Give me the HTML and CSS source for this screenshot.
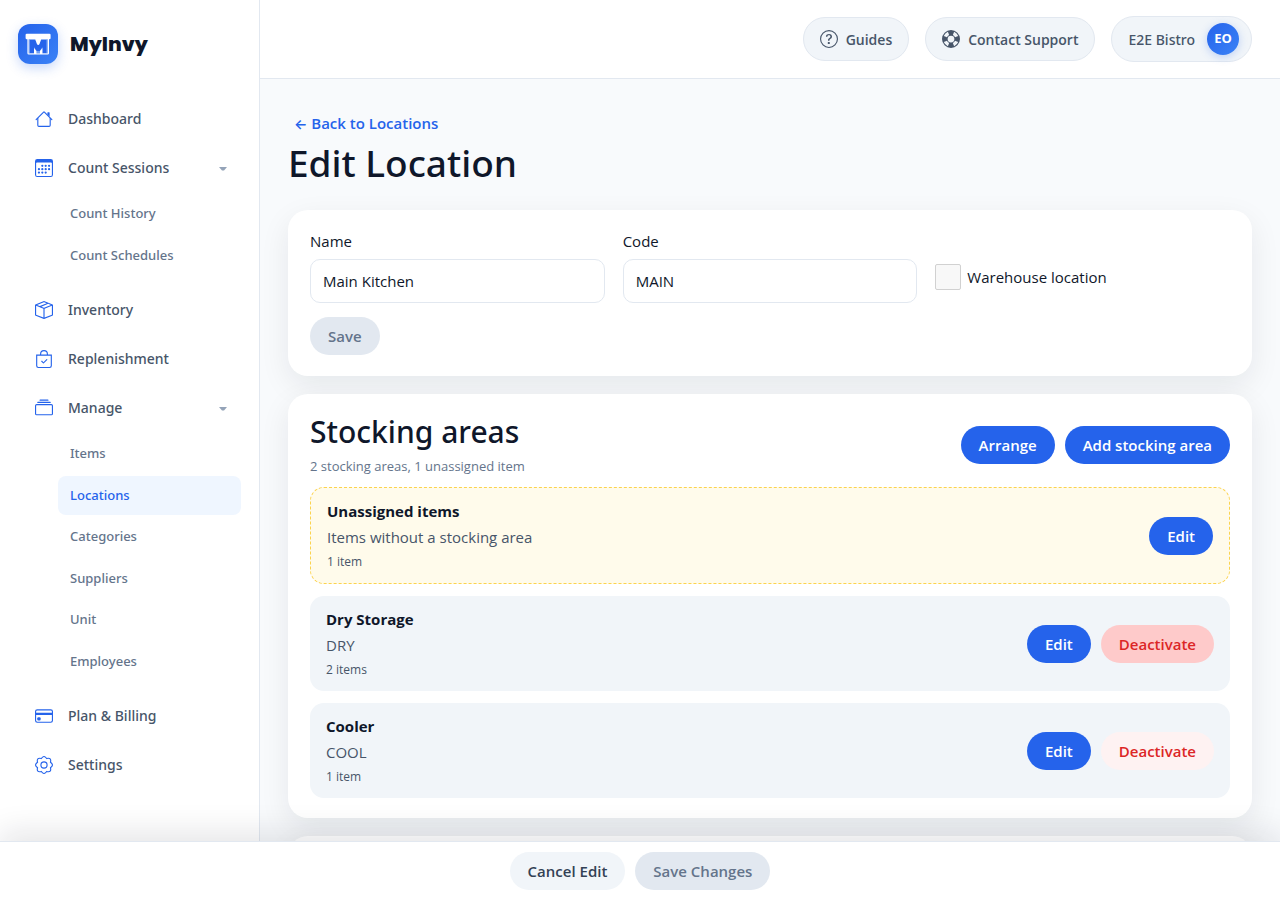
FILE: index.html
```html
<!DOCTYPE html>
<html lang="en">
<head>
<meta charset="utf-8">
<meta name="viewport" content="width=device-width, initial-scale=1">
<title>Edit Location - MyInvy</title>
<link rel="stylesheet" href="styles.css">
</head>
<body>
<div class="app">
  <aside class="sidebar">
    <a class="brand" href="#">
      <span class="brand-mark">
        <svg viewBox="0 0 40 40" width="40" height="40" aria-hidden="true">
          <path fill="#fff" d="M8.800 9.800h22.600q1.200 0 1.200 1.200v3q0 1.200-1.200 1.200H8.800q-1.200 0-1.200-1.200v-3q0-1.200 1.200-1.200z"/>
          <path fill="#fff" fill-opacity=".3" d="M10 15h20.400v15H10z"/>
          <path fill="none" stroke="#fff" stroke-width="1.200" d="M10 15v14.200q0 .8.800.8h18.800q.8 0 .8-.8V15"/>
          <path fill="#2563eb" d="M12 16h5.200l3 5 3-5h5.200v13h-4v-6l-2.600 4h-3.200L16 23v6h-4z"/>
          <path fill="#fff" d="M17.200 15h6l-1.800 5.200q-1.200 1.600-2.400 0z"/>
          <path fill="#fff" d="M16 30v-6l2.400 3v3zM24.400 30v-6L22 27v3z"/>
        </svg>
      </span>
      <span class="brand-name">MyInvy</span>
    </a>
    <nav class="nav" aria-label="Main">
      <a class="nav-item" href="#">
        <svg class="icon" viewBox="0 0 16 16" aria-hidden="true"><path fill-rule="evenodd" d="M2 13.500V7h1v6.500a.5.5 0 0 0 .5.5h9a.5.5 0 0 0 .5-.5V7h1v6.500a1.500 1.500 0 0 1-1.500 1.500h-9A1.500 1.500 0 0 1 2 13.500zm11-11V6l-2-2V2.500a.5.5 0 0 1 .5-.5h1a.5.5 0 0 1 .5.5z"/><path fill-rule="evenodd" d="M7.293 1.500a1 1 0 0 1 1.414 0l6.647 6.646a.5.5 0 0 1-.708.708L8 2.207 1.354 8.854a.5.5 0 1 1-.708-.708L7.293 1.500z"/></svg>
        <span>Dashboard</span>
      </a>
      <button class="nav-item" type="button" aria-expanded="true">
        <svg class="icon" viewBox="0 0 16 16" aria-hidden="true"><path d="M14 0H2a2 2 0 0 0-2 2v12a2 2 0 0 0 2 2h12a2 2 0 0 0 2-2V2a2 2 0 0 0-2-2zM1 3.857C1 3.384 1.448 3 2 3h12c.552 0 1 .384 1 .857v10.286c0 .473-.448.857-1 .857H2c-.552 0-1-.384-1-.857V3.857z"/><path d="M6.500 7a1 1 0 1 0 0-2 1 1 0 0 0 0 2zm3 0a1 1 0 1 0 0-2 1 1 0 0 0 0 2zm3 0a1 1 0 1 0 0-2 1 1 0 0 0 0 2zm-9 3a1 1 0 1 0 0-2 1 1 0 0 0 0 2zm3 0a1 1 0 1 0 0-2 1 1 0 0 0 0 2zm3 0a1 1 0 1 0 0-2 1 1 0 0 0 0 2zm3 0a1 1 0 1 0 0-2 1 1 0 0 0 0 2zm-9 3a1 1 0 1 0 0-2 1 1 0 0 0 0 2zm3 0a1 1 0 1 0 0-2 1 1 0 0 0 0 2zm3 0a1 1 0 1 0 0-2 1 1 0 0 0 0 2z"/></svg>
        <span>Count Sessions</span>
        <svg class="caret" viewBox="0 0 8 6" aria-hidden="true"><path d="M0 2h8L5 5.500H3z"/></svg>
      </button>
      <div class="subnav">
        <a href="#">Count History</a>
        <a href="#">Count Schedules</a>
      </div>
      <a class="nav-item" href="#">
        <svg class="icon" viewBox="0 0 16 16" aria-hidden="true"><path d="M8.186 1.113a.5.5 0 0 0-.372 0L1.846 3.500l2.404.961L10.404 2l-2.218-.887zm3.564 1.426L5.596 5 8 5.961 14.154 3.500l-2.404-.961zm3.250 1.700-6.500 2.600v7.922l6.500-2.600V4.240zM7.500 14.762V6.838L1 4.239v7.923l6.500 2.600zM7.443.184a1.500 1.500 0 0 1 1.114 0l7.129 2.852A.5.5 0 0 1 16 3.500v8.662a1 1 0 0 1-.629.928l-7.185 2.874a.5.5 0 0 1-.372 0L.63 13.090a1 1 0 0 1-.63-.928V3.500a.5.5 0 0 1 .314-.464L7.443.184z"/></svg>
        <span>Inventory</span>
      </a>
      <a class="nav-item" href="#">
        <svg class="icon" viewBox="0 0 16 16" aria-hidden="true"><path fill-rule="evenodd" d="M10.854 8.146a.5.5 0 0 1 0 .708l-3 3a.5.5 0 0 1-.708 0l-1.500-1.500a.5.5 0 0 1 .708-.708L7.500 10.793l2.646-2.647a.5.5 0 0 1 .708 0z"/><path d="M8 1a2.500 2.500 0 0 1 2.500 2.500V4h-5v-.5A2.500 2.500 0 0 1 8 1zm3.500 3v-.5a3.500 3.500 0 1 0-7 0V4H1v10a2 2 0 0 0 2 2h10a2 2 0 0 0 2-2V4h-3.500zM2 5h12v9a1 1 0 0 1-1 1H3a1 1 0 0 1-1-1V5z"/></svg>
        <span>Replenishment</span>
      </a>
      <button class="nav-item" type="button" aria-expanded="true">
        <svg class="icon" viewBox="0 0 16 16" aria-hidden="true"><path d="M2.500 3.500a.5.5 0 0 1 0-1h11a.5.5 0 0 1 0 1h-11zm2-2a.5.5 0 0 1 0-1h7a.5.5 0 0 1 0 1h-7zM0 13a1.500 1.500 0 0 0 1.500 1.500h13A1.500 1.500 0 0 0 16 13V6a1.500 1.500 0 0 0-1.500-1.500h-13A1.500 1.500 0 0 0 0 6v7zm1.500.5A.5.5 0 0 1 1 13V6a.5.5 0 0 1 .5-.5h13a.5.5 0 0 1 .5.5v7a.5.5 0 0 1-.5.5h-13z"/></svg>
        <span>Manage</span>
        <svg class="caret" viewBox="0 0 8 6" aria-hidden="true"><path d="M0 2h8L5 5.500H3z"/></svg>
      </button>
      <div class="subnav">
        <a href="#">Items</a>
        <a class="active" href="#" aria-current="page">Locations</a>
        <a href="#">Categories</a>
        <a href="#">Suppliers</a>
        <a href="#">Unit</a>
        <a href="#">Employees</a>
      </div>
      <a class="nav-item" href="#">
        <svg class="icon" viewBox="0 0 16 16" aria-hidden="true"><path d="M0 4a2 2 0 0 1 2-2h12a2 2 0 0 1 2 2v8a2 2 0 0 1-2 2H2a2 2 0 0 1-2-2V4zm2-1a1 1 0 0 0-1 1v1h14V4a1 1 0 0 0-1-1H2zm13 4H1v5a1 1 0 0 0 1 1h12a1 1 0 0 0 1-1V7z"/><path d="M2 10a1 1 0 0 1 1-1h1a1 1 0 0 1 1 1v1a1 1 0 0 1-1 1H3a1 1 0 0 1-1-1v-1z"/></svg>
        <span>Plan &amp; Billing</span>
      </a>
      <a class="nav-item" href="#">
        <svg class="icon outline" viewBox="-8 -8 16 16" aria-hidden="true"><path d="M-2.370-5.730Q0-9.300 2.370-5.730Q6.900-6.900 5.730-2.370Q9.300 0 5.730 2.370Q6.900 6.900 2.370 5.730Q0 9.300-2.370 5.730Q-6.900 6.900-5.730 2.370Q-9.300 0-5.730-2.370Q-6.900-6.900-2.370-5.730Z"/><circle r="2.750"/></svg>
        <span>Settings</span>
      </a>
    </nav>
  </aside>

  <div class="page">
    <header class="topbar">
      <a class="pill" href="#">
        <svg class="icon" viewBox="0 0 16 16" aria-hidden="true"><path d="M8 15A7 7 0 1 1 8 1a7 7 0 0 1 0 14zm0 1A8 8 0 1 0 8 0a8 8 0 0 0 0 16z"/><path d="M5.255 5.786a.237.237 0 0 0 .241.247h.825c.138 0 .248-.113.266-.250.090-.656.540-1.134 1.342-1.134.686 0 1.314.343 1.314 1.168 0 .635-.374.927-.965 1.371-.673.489-1.206 1.060-1.168 1.987l.003.217a.250.250 0 0 0 .250.246h.811a.250.250 0 0 0 .250-.250v-.105c0-.718.273-.927 1.010-1.486.609-.463 1.244-.977 1.244-2.056 0-1.511-1.276-2.241-2.673-2.241-1.267 0-2.655.590-2.750 2.286zm1.557 5.763c0 .533.425.927 1.010.927.609 0 1.028-.394 1.028-.927 0-.552-.420-.940-1.029-.940-.584 0-1.009.388-1.009.940z"/></svg>
        Guides
      </a>
      <a class="pill" href="#">
        <svg class="icon" viewBox="0 0 16 16" aria-hidden="true"><path d="M8 16A8 8 0 1 0 8 0a8 8 0 0 0 0 16zm6.430-5.228a7.025 7.025 0 0 1-3.658 3.658l-1.115-2.788a4.015 4.015 0 0 0 1.985-1.985l2.788 1.115zM5.228 14.430a7.025 7.025 0 0 1-3.658-3.658l2.788-1.115a4.015 4.015 0 0 0 1.985 1.985L5.228 14.430zm9.202-9.202-2.788 1.115a4.015 4.015 0 0 0-1.985-1.985l1.115-2.788a7.025 7.025 0 0 1 3.658 3.658zm-8.087-.870a4.015 4.015 0 0 0-1.985 1.985L1.570 5.228A7.025 7.025 0 0 1 5.228 1.570l1.115 2.788zM8 11a3 3 0 1 1 0-6 3 3 0 0 1 0 6z"/></svg>
        Contact Support
      </a>
      <button class="pill account" type="button">
        <span>E2E Bistro</span>
        <span class="avatar">EO</span>
      </button>
    </header>

    <main class="content">
      <div class="page-head">
        <a class="back" href="#"><span class="arrow">←</span> Back to Locations</a>
        <h1>Edit Location</h1>
      </div>

      <form class="card details">
        <div class="fields">
          <div class="field">
            <label for="name">Name</label>
            <input id="name" type="text" value="Main Kitchen">
          </div>
          <div class="field">
            <label for="code">Code</label>
            <input id="code" type="text" value="MAIN">
          </div>
          <div class="check">
            <input id="warehouse" type="checkbox">
            <label for="warehouse">Warehouse location</label>
          </div>
        </div>
        <button class="btn muted" type="submit" disabled>Save</button>
      </form>

      <section class="card">
        <div class="section-head">
          <div>
            <h2>Stocking areas</h2>
            <p>2 stocking areas, 1 unassigned item</p>
          </div>
          <div class="actions">
            <button class="btn primary" type="button">Arrange</button>
            <button class="btn primary" type="button">Add stocking area</button>
          </div>
        </div>
        <div class="areas">
          <article class="area unassigned">
            <div class="area-text">
              <h3>Unassigned items</h3>
              <p>Items without a stocking area</p>
              <small>1 item</small>
            </div>
            <div class="actions">
              <button class="btn primary" type="button">Edit</button>
            </div>
          </article>
          <article class="area">
            <div class="area-text">
              <h3>Dry Storage</h3>
              <p>DRY</p>
              <small>2 items</small>
            </div>
            <div class="actions">
              <button class="btn primary" type="button">Edit</button>
              <button class="btn danger highlighted" type="button">Deactivate</button>
            </div>
          </article>
          <article class="area">
            <div class="area-text">
              <h3>Cooler</h3>
              <p>COOL</p>
              <small>1 item</small>
            </div>
            <div class="actions">
              <button class="btn primary" type="button">Edit</button>
              <button class="btn danger" type="button">Deactivate</button>
            </div>
          </article>
        </div>
      </section>

      <section class="card next"></section>
    </main>
  </div>
</div>

<footer class="savebar">
  <button class="btn light" type="button">Cancel Edit</button>
  <button class="btn muted" type="button" disabled>Save Changes</button>
</footer>
</body>
</html>
```

FILE: styles.css
```css
* { box-sizing: border-box; }

body {
  margin: 0;
  background: #f8fafc;
  color: #0f172a;
  font-family: "Open Sans", "Noto Sans", sans-serif;
  font-size: 15px;
  line-height: 1.5;
}

h1, h2, h3, p { margin: 0; }
a { color: inherit; text-decoration: none; }
button, input { font: inherit; color: inherit; }
button { border: 0; cursor: pointer; }
button:disabled { cursor: default; }

/* Noto Sans carries the medium weight */
.nav, .account, h1, h2 { font-family: "Noto Sans", "Open Sans", sans-serif; font-weight: 500; }

.app { display: flex; height: 100vh; }

/* Sidebar */
.sidebar {
  flex: none;
  width: 260px;
  padding: 24px 18px;
  background: #fff;
  border-right: 1px solid #e2e8f0;
}
.brand { display: flex; align-items: center; gap: 12px; margin-bottom: 32px; }
.brand-mark {
  display: flex;
  border-radius: 12px;
  background: linear-gradient(135deg, #2563eb, #3b82f6);
  box-shadow: 0 4px 12px rgba(37, 99, 235, 0.25);
}
.brand-name { font-family: Poppins, Inter, sans-serif; font-size: 20px; font-weight: 800; }
.nav { display: flex; flex-direction: column; gap: 4px; }
.nav-item {
  display: flex;
  align-items: center;
  gap: 15px;
  padding: 12px 14px 12px 17px;
  background: none;
  color: #475569;
  font-size: 14px;
  text-align: left;
}
.icon { flex: none; width: 18px; height: 18px; fill: currentColor; }
.nav-item .icon { fill: #2563eb; }
.nav-item .outline { fill: none; stroke: #2563eb; }
.caret { width: 8px; height: 6px; margin-left: auto; fill: #94a3b8; }
.subnav {
  display: flex;
  flex-direction: column;
  gap: 2px;
  margin: 0 0 8px 40px;
  color: #64748b;
  font-size: 13px;
}
.subnav a { padding: 10px 12px; border-radius: 8px; }
.subnav .active { background: #eff6ff; color: #2563eb; }

/* Top bar */
.page { flex: 1; min-width: 0; display: flex; flex-direction: column; }
.topbar {
  display: flex;
  flex: none;
  justify-content: flex-end;
  align-items: center;
  gap: 16px;
  padding: 16px 28px;
  background: #fff;
  border-bottom: 1px solid #e2e8f0;
}
.pill {
  display: flex;
  align-items: center;
  gap: 8px;
  height: 44px;
  padding: 0 16px;
  border: 1px solid #e2e8f0;
  border-radius: 999px;
  background: #f1f5f9;
  color: #475569;
  font-size: 14px;
  font-weight: 600;
}
.pill.account { gap: 12px; height: 46px; padding-right: 12px; font-weight: 500; }
.avatar {
  display: grid;
  place-items: center;
  width: 32px;
  height: 32px;
  border-radius: 50%;
  background: linear-gradient(135deg, #2563eb, #3b82f6);
  box-shadow: 0 2px 8px rgba(37, 99, 235, 0.25);
  color: #fff;
  font-family: "Open Sans", sans-serif;
  font-size: 13px;
  font-weight: 700;
}

/* Content */
.content {
  flex: 1;
  min-height: 0;
  display: flex;
  flex-direction: column;
  gap: 18px;
  padding: 28px 28px 0;
  overflow-y: auto;
  scrollbar-width: none;
}
.page-head { flex: none; }
.back { display: inline-block; padding: 5px 6px; color: #2563eb; font-weight: 600; line-height: 23px; }
.arrow { font-family: Inter, sans-serif; font-size: 14px; }
h1 { margin-bottom: 6px; font-size: 37px; line-height: 46px; }
.card {
  flex: none;
  padding: 20px 22px;
  border-radius: 20px;
  background: #fff;
  box-shadow: 0 10px 30px rgba(15, 23, 42, 0.08);
}
.details { display: flex; flex-direction: column; align-items: flex-start; gap: 14px; padding-bottom: 21px; }
.fields {
  display: grid;
  grid-template-columns: repeat(3, minmax(0, 1fr));
  gap: 18px;
  width: 100%;
}
.field { display: flex; flex-direction: column; gap: 6px; }
.field label { line-height: 23px; }
.field input {
  width: 100%;
  height: 44px;
  padding: 0 12px;
  border: 1px solid #e2e8f0;
  border-radius: 10px;
  background: #fff;
}
.check { display: flex; align-items: center; align-self: end; gap: 6px; padding-bottom: 13px; line-height: 22px; }
.check input {
  appearance: none;
  width: 26px;
  height: 26px;
  margin: 0;
  border: 1px solid #d1d1d1;
  border-radius: 2px;
  background: #f8f8f8;
}

.btn { padding: 8px 18px; border-radius: 999px; font-weight: 600; line-height: 22px; white-space: nowrap; }
.primary { background: #2563eb; color: #fff; }
.muted { background: #e2e8f0; color: #64748b; }
.light { background: #f1f5f9; color: #334155; }
.danger { background: #fef2f2; color: #dc2626; }
.danger.highlighted { background: #fecaca; }

.section-head { display: flex; justify-content: space-between; align-items: center; margin-bottom: 11px; }
h2 { margin-bottom: 6px; font-size: 30px; line-height: 36px; }
.section-head p { color: #64748b; font-size: 13px; line-height: 20px; }
.actions { display: flex; gap: 10px; }
.areas { display: flex; flex-direction: column; gap: 12px; }
.area {
  display: flex;
  justify-content: space-between;
  align-items: center;
  padding: 12px 16px;
  border-radius: 14px;
  background: #f1f5f9;
}
.unassigned { border: 1px dashed #fcd34d; background: #fffbeb; }
.area-text { display: flex; flex-direction: column; gap: 4px; color: #475569; line-height: 22px; }
.area-text h3 { color: #0f172a; font-size: 15px; font-weight: 700; }
.area-text small { font-size: 12px; line-height: 19px; }
.next { height: 200px; }

/* Save bar */
.savebar {
  position: fixed;
  right: 0;
  bottom: 0;
  left: 0;
  display: flex;
  justify-content: center;
  gap: 10px;
  padding: 10px;
  border-top: 1px solid #e2e8f0;
  background: #fff;
  box-shadow: 0 -10px 30px rgba(15, 23, 42, 0.1);
}
```
